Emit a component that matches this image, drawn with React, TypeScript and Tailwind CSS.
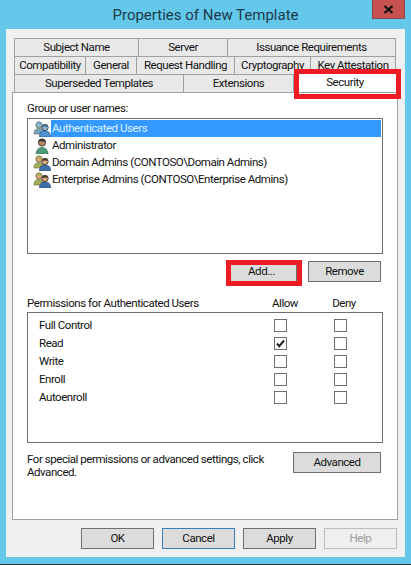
import React from "react";

function GroupIcon({ front = "#3f6fa8", back = "#a3ad55", head = "#d8a878", hair = "#4a3a28" }: { front?: string; back?: string; head?: string; hair?: string }) {
  return (
    <svg width="18" height="16" viewBox="0 0 18 16" className="shrink-0">
      <circle cx="6" cy="4" r="3.200" fill={head} stroke="#6b6b45" strokeWidth="0.8" />
      <path d="M3 3.500C3.500 1.500 4.800 1 6 1s2.500.5 3 2.500C7.500 2.700 4.500 2.700 3 3.500z" fill={back} />
      <path d="M1 12c0-3 2-4.500 5-4.500s5 1.500 5 4.500v1H1z" fill={back} stroke="#6b6b45" strokeWidth="0.6" />
      <circle cx="12" cy="6.500" r="3.200" fill={head} stroke="#333" strokeWidth="0.8" />
      <path d="M9 6C9.500 4 10.800 3.300 12 3.300s2.500.7 3 2.700C13.500 5.200 10.500 5.200 9 6z" fill={hair} />
      <path d="M6.500 15c0-3.500 2-5 5.500-5s5.500 1.500 5.500 5v1h-11z" fill={front} stroke="#2a4a70" strokeWidth="0.6" />
    </svg>
  );
}

function UserIcon() {
  return (
    <svg width="18" height="16" viewBox="0 0 18 16" className="shrink-0">
      <circle cx="9" cy="4.500" r="3.600" fill="#b98a60" stroke="#333" strokeWidth="0.9" />
      <path d="M9 1c-2.500 0-3.600 1.500-3.600 3.200C7 3 10.500 3 12.600 4.200 12.600 2.500 11.500 1 9 1z" fill="#333" />
      <path d="M3 16c0-4 2.500-6.500 6-6.500s6 2.500 6 6.500z" fill="#4f9a78" stroke="#2f6a50" strokeWidth="0.6" />
    </svg>
  );
}

function Btn({ w, children, variant }: { w: string; children: React.ReactNode; variant?: "focus" | "disabled" }) {
  const cls =
    variant === "focus"
      ? "bg-[#dcdcdc] border-[#3a7fb8] text-[#111]"
      : variant === "disabled"
        ? "bg-[#efefef] border-[#bdbdbd] text-[#9a9a9a]"
        : "bg-[#dcdcdc] border-[#6f6f6f] text-[#111]";
  return <div className={`${w} h-[21px] shrink-0 border flex items-center justify-center whitespace-nowrap ${cls}`}>{children}</div>;
}

function Tab({ w, children }: { w: string; children: React.ReactNode }) {
  return (
    <div className={`${w} h-[18px] pt-[1px] flex items-center justify-center bg-[#e9e9e9] border-t border-r border-[#a0a0a0] leading-none text-[#111] whitespace-nowrap overflow-hidden`}>
      {children}
    </div>
  );
}

function Check({ checked }: { checked?: boolean }) {
  return (
    <div className="w-[13px] h-[13px] shrink-0 border border-[#707070] bg-white flex items-center justify-center">
      {checked && (
        <svg width="11" height="11" viewBox="0 0 11 11">
          <path d="M2 5.500 4.300 8.200 9 2.500" fill="none" stroke="#222" strokeWidth="2" />
        </svg>
      )}
    </div>
  );
}

const perms = [
  ["Full Control", false],
  ["Read", true],
  ["Write", false],
  ["Enroll", false],
  ["Autoenroll", false],
] as const;

export default function App() {
  return (
    <div className="relative w-[411px] h-[565px] bg-[#63c8ea] overflow-hidden flex flex-col font-['Roboto','Open_Sans',sans-serif] text-[11.5px] tracking-[-0.45px] text-[#111]">
      <div className="relative h-[29px] shrink-0 flex items-center justify-center pt-[1px] text-[#1c3a4a] text-[15px] tracking-normal">
        <span>Properties of New Template</span>
        <div className="absolute right-[6px] top-0 w-[33px] h-[19px] bg-[#c75050] border border-[#8c4a44] border-t-0 flex items-center justify-center">
          <svg width="11" height="9" viewBox="0 0 11 9">
            <path d="M1.500 1 9.500 8M9.500 1 1.500 8" stroke="#111" strokeWidth="2.200" fill="none" />
          </svg>
        </div>
      </div>

      <div className="mx-[6px] h-[528px] bg-[#f0f0f0] flex flex-col pt-[9px]">
        <div className="flex flex-col pl-[8px]">
          <div className="flex">
            <Tab w="w-[125px] border-l">Subject Name</Tab>
            <Tab w="w-[89px]">Server</Tab>
            <Tab w="w-[168px]">Issuance Requirements</Tab>
          </div>
          <div className="flex">
            <Tab w="w-[72px] border-l">Compatibility</Tab>
            <Tab w="w-[51px]">General</Tab>
            <Tab w="w-[98px]">Request Handling</Tab>
            <Tab w="w-[76px]">Cryptography</Tab>
            <Tab w="w-[85px]">Key Attestation</Tab>
          </div>
          <div className="flex">
            <Tab w="w-[170px] border-l">Superseded Templates</Tab>
            <Tab w="w-[110px]">Extensions</Tab>
            <div className="w-[102px] h-[18px] bg-white flex items-center justify-center leading-none">Security</div>
          </div>
        </div>

        <div className="mx-[6px] w-[386px] h-[428px] bg-white border border-[#a0a0a0] px-[14px] pt-[7px] flex flex-col">
          <div className="h-[16px] leading-[16px]">Group or user names:</div>
          <div className="mt-[2px] w-[356px] h-[136px] shrink-0 border border-[#707070] pt-[1px] pl-[5px] pr-[1px] flex flex-col">
            <div className="flex items-center h-[17px]">
              <GroupIcon front="#4f93d6" back="#6fa5c0" head="#8fb8d0" hair="#3f6f90" />
              <span className="flex-1 bg-[#3399ff] text-[#dff0ff] h-[17px] leading-[17px] pl-[1px]">Authenticated Users</span>
            </div>
            <div className="flex items-center h-[17px]"><UserIcon /><span className="pl-[1px] pt-[1px]">Administrator</span></div>
            <div className="flex items-center h-[17px]"><GroupIcon /><span className="pl-[1px] pt-[1px] whitespace-nowrap">Domain Admins (CONTOSO\Domain Admins)</span></div>
            <div className="flex items-center h-[17px]"><GroupIcon /><span className="pl-[1px] pt-[1px] whitespace-nowrap">Enterprise Admins (CONTOSO\Enterprise Admins)</span></div>
          </div>

          <div className="mt-[7px] flex justify-end gap-[11px] pr-[2px]">
            <Btn w="w-[71px]">Add...</Btn>
            <Btn w="w-[73px]">Remove</Btn>
          </div>

          <div className="mt-[13px] h-[16px] leading-[16px] flex whitespace-nowrap">
            <span className="w-[245px]">Permissions for Authenticated Users</span>
            <span className="w-[24px] text-center">Allow</span>
            <span className="ml-[36px] w-[24px] text-center">Deny</span>
          </div>
          <div className="mt-[1px] w-[356px] h-[131px] shrink-0 border border-[#707070] pt-[3px] flex flex-col">
            {perms.map(([label, on]) => (
              <div key={label} className="flex items-center h-[18px]">
                <span className="w-[246px] pl-[11px] pt-[1px]">{label}</span>
                <Check checked={on} />
                <span className="w-[47px]" />
                <Check />
              </div>
            ))}
          </div>

          <div className="mt-[9px] flex justify-between pr-[2px]">
            <div className="leading-[13px] pt-[1px]">For special permissions or advanced settings, click<br />Advanced.</div>
            <Btn w="w-[88px]">Advanced</Btn>
          </div>
        </div>

        <div className="mt-[8px] flex justify-end gap-[8px] pr-[8px]">
          <Btn w="w-[73px]">OK</Btn>
          <Btn w="w-[73px]" variant="focus">Cancel</Btn>
          <Btn w="w-[73px]">Apply</Btn>
          <Btn w="w-[73px]" variant="disabled">Help</Btn>
        </div>
      </div>

      <div className="absolute left-0 bottom-0 w-full h-[1px] bg-[#333]" />

      <div className="absolute left-[294px] top-[69px] w-[107px] h-[30px] border-[5px] border-[#ed1c24]" />
      <div className="absolute left-[226px] top-[260px] w-[76px] h-[26px] border-[5px] border-[#ed1c24]" />
    </div>
  );
}
